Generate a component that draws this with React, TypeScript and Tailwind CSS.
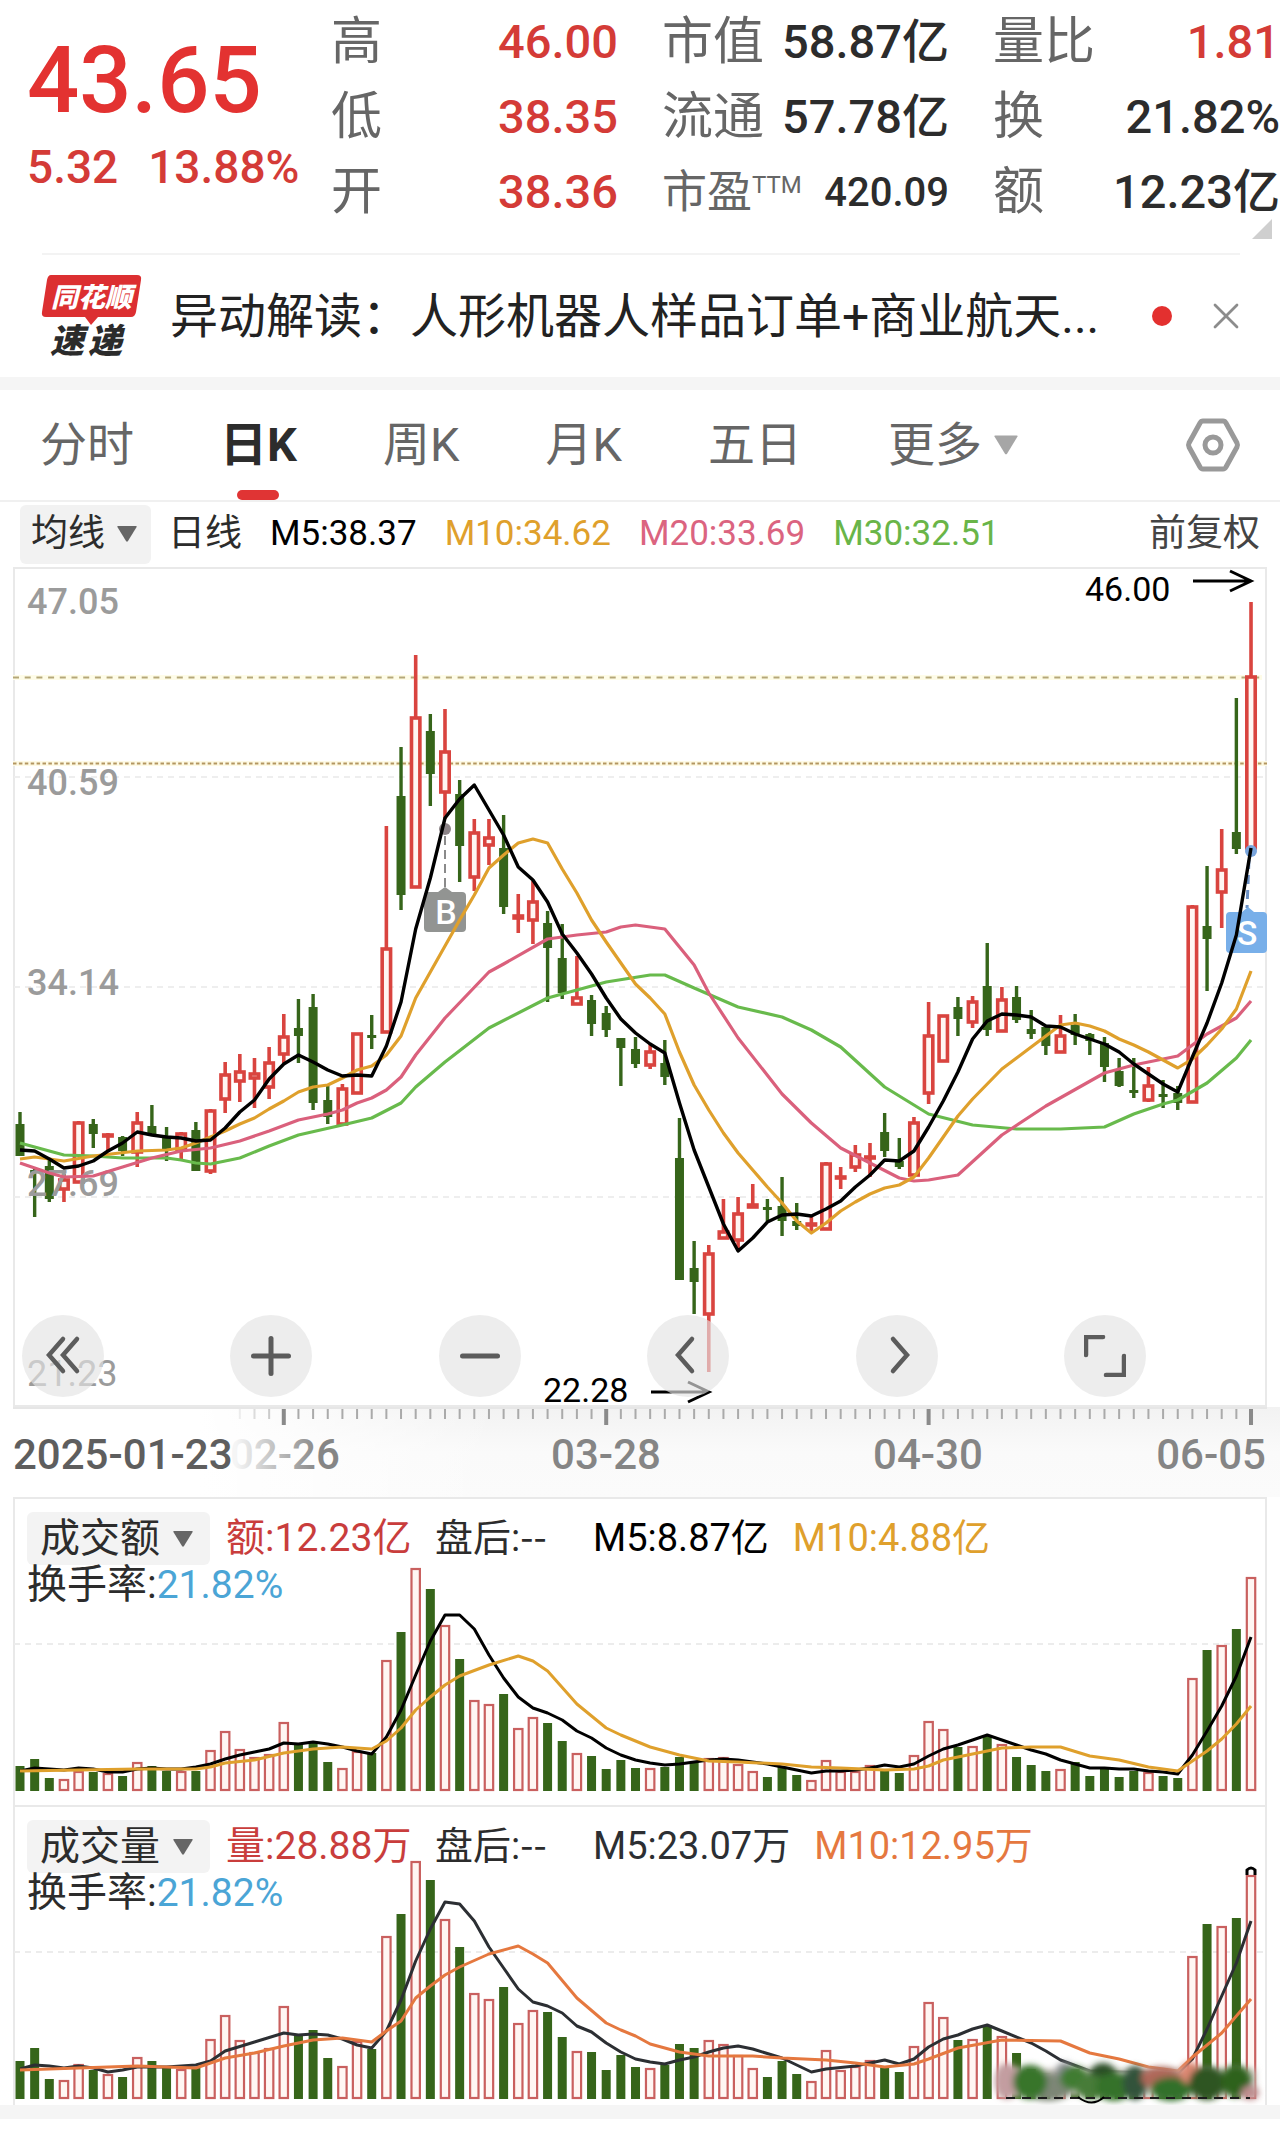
import { useState } from "react";
import { X, Plus, Minus } from "lucide-react";
import clsx from "clsx";

const RED = "#d9443f";
const GREEN = "#36651a";
const STEP = 14.655;
const xAt = (i: number) => 20 + i * STEP;

type Candle = [number, number, number, number];
type Point = [number, number];

// U = close above open, D = close below open, one letter per trading day
const DIRECTIONS =
  "DDDUUDUDUDDUDUUUUUUDDDUUDUDUDUDUUDUUDDUDDDDUDDDUUUUDDDUUUUUDDUUUDUDUDDDUDDDDDUDDUDUDU";
const isUp = (i: number) => DIRECTIONS[i] === "U";

// high, body top, body bottom, low
const CANDLES: Candle[] = [
  [1112, 1124, 1156, 1156], [1168, 1170, 1173, 1217], [1158, 1166, 1199, 1202], [1174, 1179, 1190, 1202],
  [1121, 1122, 1183, 1183], [1119, 1124, 1134, 1148], [1133, 1134, 1137, 1151], [1136, 1137, 1151, 1156],
  [1112, 1122, 1153, 1167], [1105, 1126, 1135, 1135], [1127, 1137, 1151, 1161], [1132, 1133, 1151, 1159],
  [1122, 1130, 1171, 1171], [1109, 1110, 1172, 1174], [1062, 1074, 1100, 1113], [1054, 1071, 1082, 1102],
  [1058, 1073, 1079, 1108], [1047, 1062, 1088, 1099], [1014, 1036, 1055, 1063], [999, 1028, 1036, 1063],
  [994, 1007, 1103, 1110], [1086, 1100, 1117, 1124], [1084, 1088, 1125, 1125], [1033, 1033, 1094, 1094],
  [1015, 1035, 1037, 1049], [826, 948, 1033, 1033], [747, 796, 895, 910], [655, 717, 888, 888],
  [714, 731, 774, 806], [709, 751, 793, 819], [780, 794, 846, 882], [819, 832, 878, 891],
  [819, 837, 846, 865], [815, 848, 907, 914], [894, 915, 919, 933], [881, 901, 921, 944],
  [911, 923, 948, 1002], [924, 958, 993, 999], [956, 997, 1005, 1005], [995, 1000, 1024, 1036],
  [1006, 1013, 1030, 1037], [1038, 1038, 1048, 1086], [1037, 1049, 1064, 1068], [1043, 1051, 1066, 1069],
  [1040, 1063, 1077, 1085], [1118, 1158, 1280, 1280], [1241, 1268, 1282, 1314], [1245, 1253, 1315, 1372],
  [1199, 1231, 1239, 1239], [1197, 1213, 1241, 1248], [1184, 1204, 1208, 1208], [1199, 1207, 1208, 1221],
  [1177, 1206, 1221, 1236], [1203, 1221, 1226, 1230], [1216, 1223, 1226, 1233], [1162, 1163, 1230, 1230],
  [1167, 1176, 1179, 1189], [1145, 1154, 1168, 1172], [1143, 1156, 1159, 1177], [1113, 1132, 1151, 1157],
  [1138, 1161, 1167, 1169], [1117, 1122, 1176, 1176], [1002, 1035, 1094, 1104], [1015, 1015, 1062, 1062],
  [997, 1007, 1019, 1036], [996, 1001, 1023, 1028], [943, 986, 1030, 1036], [987, 999, 1032, 1032],
  [986, 997, 1020, 1023], [1010, 1029, 1034, 1039], [1026, 1027, 1046, 1055], [1015, 1035, 1053, 1053],
  [1014, 1025, 1035, 1045], [1033, 1034, 1041, 1055], [1037, 1043, 1067, 1082], [1058, 1071, 1086, 1087],
  [1058, 1090, 1093, 1098], [1067, 1085, 1101, 1102], [1080, 1094, 1096, 1108], [1086, 1093, 1103, 1110],
  [905, 906, 1103, 1103], [866, 926, 939, 991], [829, 869, 893, 928], [698, 832, 849, 854],
  [602, 676, 849, 849],
];

const MA5: Point[] = [
  1150, 1151, 1159, 1168, 1166, 1161, 1151, 1143, 1132, 1135, 1137, 1138, 1141, 1140, 1128, 1112, 1100,
  1079, 1064, 1055, 1062, 1070, 1076, 1075, 1076, 1046, 1002, 929, 878, 818, 799, 785, 810, 835, 867, 880,
  902, 934, 953, 974, 998, 1019, 1033, 1044, 1053, 1103, 1150, 1187, 1224, 1251, 1238, 1222, 1215, 1214,
  1216, 1209, 1201, 1187, 1175, 1160, 1161, 1151, 1127, 1101, 1072, 1039, 1021, 1014, 1015, 1017, 1026,
  1027, 1034, 1039, 1044, 1052, 1064, 1074, 1084, 1092, 1057, 1023, 983, 935, 848,
].map((y, i) => [i, y]);

const MA10: Point[] = [
  [0, 1159], [1, 1157], [3, 1161], [5, 1156], [8, 1151], [10, 1150], [11, 1148], [12, 1143], [13, 1137],
  [14, 1131], [15, 1124], [16, 1118], [17, 1109], [18, 1101], [19, 1092], [20, 1087], [21, 1085], [22, 1078],
  [23, 1070], [24, 1066], [25, 1055], [26, 1036], [27, 998], [28, 972], [29, 946], [30, 920], [31, 895],
  [32, 868], [33, 855], [34, 843], [35, 839], [36, 843], [37, 869], [38, 893], [39, 920], [40, 942],
  [41, 963], [42, 984], [43, 998], [44, 1014], [45, 1052], [46, 1085], [47, 1110], [48, 1133], [49, 1153],
  [50, 1170], [51, 1187], [52, 1203], [53, 1221], [54, 1233], [55, 1223], [56, 1211], [57, 1202], [58, 1194],
  [59, 1188], [60, 1185], [61, 1177], [62, 1158], [63, 1137], [64, 1116], [65, 1099], [66, 1084], [67, 1069],
  [68, 1058], [69, 1047], [70, 1036], [71, 1025], [72, 1023], [73, 1026], [74, 1031], [75, 1039], [76, 1045],
  [77, 1052], [78, 1060], [79, 1068], [80, 1059], [81, 1045], [82, 1029], [83, 1009], [84, 971],
];

const MA20: Point[] = [
  [0, 1163], [1, 1168], [2, 1173], [3, 1177], [5, 1176], [7, 1167], [9, 1158], [11, 1151], [13, 1148],
  [15, 1141], [17, 1131], [19, 1120], [21, 1114], [22, 1110], [23, 1103], [24, 1098], [25, 1090], [26, 1077],
  [27, 1055], [29, 1018], [32, 972], [33, 964], [36, 939], [38, 935], [40, 932], [41, 927], [42, 925],
  [44, 929], [45, 947], [46, 965], [47, 993], [49, 1038], [52, 1094], [54, 1123], [56, 1148], [58, 1163],
  [60, 1178], [61, 1181], [62, 1180], [64, 1175], [67, 1135], [70, 1106], [74, 1073], [76, 1065], [79, 1056],
  [81, 1034], [83, 1018], [84, 1001],
];

const MA30: Point[] = [
  [0, 1143], [3, 1155], [5, 1156], [7, 1158], [10, 1158], [11, 1160], [12, 1163], [13, 1164], [15, 1158],
  [17, 1146], [19, 1135], [22, 1125], [24, 1118], [26, 1103], [27, 1087], [29, 1062], [32, 1028], [36, 998],
  [40, 982], [43, 975], [44, 975], [46, 988], [49, 1007], [52, 1017], [54, 1030], [56, 1047], [59, 1087],
  [62, 1114], [65, 1125], [68, 1129], [71, 1129], [74, 1127], [76, 1114], [78, 1104], [79, 1100], [81, 1083],
  [83, 1058], [84, 1040],
];

const AMOUNT = [
  25, 32, 13, 12, 20, 19, 18, 15, 29, 25, 20, 20, 20, 41, 60, 42, 34, 37, 69, 48, 49, 29, 23, 40, 38, 131, 159,
  223, 202, 166, 132, 91, 87, 97, 63, 74, 68, 50, 38, 35, 22, 31, 23, 23, 24, 34, 29, 33, 34, 27, 20, 14, 24,
  16, 11, 31, 20, 20, 26, 20, 18, 36, 70, 62, 44, 45, 56, 47, 34, 26, 20, 22, 29, 15, 22, 14, 20, 19, 15, 13,
  113, 141, 146, 162, 214,
];

const AMOUNT_MA5: Point[] = [
  20, 23, 22, 21, 23, 22, 19, 19, 22, 23, 22, 22, 24, 27, 32, 36, 39, 42, 48, 47, 49, 47, 44, 40, 37, 54, 81,
  116, 150, 176, 176, 162, 136, 113, 94, 83, 78, 71, 60, 53, 43, 36, 31, 28, 26, 27, 29, 31, 32, 31, 29, 27,
  24, 21, 18, 20, 20, 21, 23, 26, 24, 27, 35, 42, 46, 51, 56, 51, 46, 41, 37, 31, 27, 23, 23, 22, 22, 20, 19,
  17, 36, 60, 85, 115, 154,
].map((v, i) => [i, v]);

const AMOUNT_MA10: Point[] = [
  [0, 20], [4, 21], [8, 22], [12, 22], [13, 24], [14, 28], [16, 31], [18, 38], [20, 42], [22, 44], [24, 42],
  [25, 50], [26, 63], [27, 81], [28, 94], [29, 106], [30, 115], [32, 126], [34, 135], [35, 130], [36, 120],
  [38, 87], [40, 63], [41, 56], [42, 50], [43, 44], [45, 36], [47, 30], [49, 29], [52, 27], [54, 24], [56, 23],
  [59, 21], [61, 22], [62, 25], [63, 31], [65, 37], [67, 43], [69, 44], [71, 44], [73, 35], [75, 31], [77, 24],
  [79, 20], [80, 30], [81, 40], [82, 52], [83, 67], [84, 85],
];

const VOLUME = [
  38, 51, 20, 19, 35, 29, 25, 22, 42, 38, 31, 30, 31, 60, 84, 59, 47, 51, 93, 65, 69, 41, 33, 58, 50, 163, 185,
  238, 219, 180, 152, 106, 100, 112, 76, 89, 87, 62, 48, 47, 29, 44, 32, 31, 34, 55, 51, 59, 55, 44, 31, 22,
  38, 25, 18, 49, 29, 33, 39, 33, 27, 53, 97, 82, 59, 60, 74, 63, 46, 30, 26, 26, 30, 20, 26, 20, 24, 24, 20,
  18, 143, 175, 173, 181, 224,
];

const VOLUME_MA5: Point[] = [
  [0, 30], [1, 34], [2, 33], [3, 31], [4, 33], [5, 31], [6, 27], [7, 29], [8, 32], [10, 32], [12, 34], [13, 38],
  [14, 48], [16, 57], [18, 66], [19, 64], [20, 65], [21, 64], [22, 60], [23, 54], [24, 51], [25, 68], [26, 99],
  [27, 138], [28, 170], [29, 197], [30, 195], [31, 178], [32, 152], [33, 131], [34, 110], [35, 97], [36, 93],
  [37, 86], [38, 73], [39, 67], [40, 56], [41, 47], [42, 40], [43, 37], [44, 35], [45, 39], [46, 42], [47, 47],
  [48, 51], [49, 53], [50, 50], [52, 41], [54, 27], [55, 30], [57, 33], [59, 39], [60, 35], [61, 40], [62, 52],
  [63, 60], [64, 64], [65, 70], [66, 74], [67, 68], [69, 56], [70, 48], [71, 39], [73, 28], [79, 25], [80, 40],
  [81, 70], [82, 103], [83, 136], [84, 178],
];

const VOLUME_MA10: Point[] = [
  [0, 29], [4, 31], [8, 33], [12, 31], [13, 36], [14, 41], [16, 46], [18, 53], [20, 59], [22, 61], [24, 57],
  [25, 68], [26, 78], [27, 101], [28, 113], [29, 124], [30, 132], [32, 145], [34, 153], [35, 145], [36, 136],
  [38, 101], [40, 76], [41, 69], [42, 63], [43, 55], [45, 47], [47, 43], [50, 43], [52, 41], [55, 39], [57, 36],
  [59, 32], [61, 35], [62, 40], [64, 51], [67, 59], [71, 58], [73, 46], [75, 40], [77, 32], [79, 28], [80, 42],
  [82, 66], [84, 100],
];

const toPath = (points: Point[], y: (v: number) => number = (v) => v) =>
  points.map(([i, v]) => `${xAt(i)},${y(v)}`).join(" ");

interface Stat {
  label: string;
  value: string;
  red?: boolean;
  ttm?: boolean;
}

const STATS: Stat[][] = [
  [
    { label: "高", value: "46.00", red: true },
    { label: "低", value: "38.35", red: true },
    { label: "开", value: "38.36", red: true },
  ],
  [
    { label: "市值", value: "58.87亿" },
    { label: "流通", value: "57.78亿" },
    { label: "市盈", value: "420.09", ttm: true },
  ],
  [
    { label: "量比", value: "1.81", red: true },
    { label: "换", value: "21.82%" },
    { label: "额", value: "12.23亿" },
  ],
];

const TABS = ["分时", "日K", "周K", "月K", "五日"];

const Triangle = ({ className }: { className?: string }) => (
  <svg viewBox="0 0 20 16" aria-hidden="true" className={clsx("h-4 w-5 shrink-0", className)}>
    <path d="M1 0h18q1 0 .6 1L11 15q-1 1.4-2 0L.4 1Q0 0 1 0Z" fill="currentColor" />
  </svg>
);

const QuoteHeader = () => (
  <header className="relative flex h-[253px] pt-[5px] pl-[27px]">
    <div className="w-[304px] shrink-0 font-medium text-[#e33231]">
      <p className="pt-[22px] text-[92px] leading-[108px]">43.65</p>
      <p className="flex gap-[30px] pt-[2px] text-[46px] leading-[60px] text-[#d43b37]">
        <span>5.32</span>
        <span>13.88%</span>
      </p>
    </div>
    <div className="flex flex-1 gap-11">
      {STATS.map((column, c) => (
        <dl key={c} className="flex-1">
          {column.map((stat) => (
            <div key={stat.label} className="flex h-[75px] items-center justify-between whitespace-nowrap">
              <dt className={clsx("flex items-center text-[#666]", stat.ttm ? "text-[45px]" : "text-[51px]")}>
                {stat.label}
                {stat.ttm && <sup className="top-0 mb-4 text-2xl">TTM</sup>}
              </dt>
              <dd
                className={clsx(
                  "font-medium",
                  stat.ttm ? "text-[40px]" : "text-[47px]",
                  stat.red ? "text-[#d43b37]" : "text-[#2c2c2c]"
                )}
              >
                {stat.value}
              </dd>
            </div>
          ))}
        </dl>
      ))}
    </div>
    <svg viewBox="0 0 20 20" aria-hidden="true" className="absolute right-2 bottom-[14px] size-5">
      <path d="M20 0v20H0Z" fill="#cfcfcf" />
    </svg>
  </header>
);

const NewsBar = () => (
  <section className="mr-[40px] ml-[42px] flex h-[124px] items-center border-t-2 border-[#f3f3f3]">
    <svg viewBox="0 0 102 84" role="img" aria-label="同花顺速递" className="h-[84px] w-[102px] shrink-0 overflow-visible">
      <path d="M9 1h86q5 0 4 5l-5 32q-1 5-5 5H56l-7 8-6-8H4q-5 0-4-5L5 6q1-5 4-5Z" fill="#dc2f31" />
      <text x="9" y="33" fontSize="27" fontWeight="900" fontStyle="italic" fill="#fff">同花顺</text>
      <text x="8" y="79" fontSize="34" fontWeight="900" fontStyle="italic" fill="#2b2b2b">速</text>
      <text x="46" y="79" fontSize="34" fontWeight="900" fontStyle="italic" fill="#2b2b2b">递</text>
    </svg>
    <a href="#news" className="ml-[26px] min-w-0 pt-[2px] text-[48px] leading-[64px] whitespace-nowrap text-[#222]">
      异动解读：人形机器人样品订单+商业航天...
    </a>
    <span className="ml-auto size-5 rounded-full bg-[#e3302f]" />
    <button type="button" aria-label="关闭" className="-mr-[8px] ml-8 text-[#8c8c8c]">
      <X size={44} strokeWidth={1.5} />
    </button>
  </section>
);

const PeriodTabs = () => {
  const [active, setActive] = useState("日K");

  return (
    <nav className="flex h-[112px] items-stretch border-b-2 border-[#f0f0f0] pr-[39px] pl-[40px]">
      <div className="flex gap-[86px]" role="tablist">
        {TABS.map((tab) => (
          <button
            key={tab}
            type="button"
            role="tab"
            aria-selected={active === tab}
            onClick={() => setActive(tab)}
            className={clsx(
              "relative text-[47px] whitespace-nowrap",
              active === tab ? "font-bold text-[#2c2c2c]" : "text-[#666]"
            )}
          >
            {tab}
            {active === tab && (
              <span className="absolute bottom-0 left-1/2 h-[10px] w-[42px] -translate-x-1/2 rounded-full bg-[#e03434]" />
            )}
          </button>
        ))}
        <button type="button" className="flex items-center gap-3 text-[47px] text-[#666]">
          更多
          <Triangle className="h-5 w-6 text-[#a6a6a6]" />
        </button>
      </div>
      <button type="button" aria-label="设置" className="ml-auto">
        <svg viewBox="0 0 56 54" className="h-[54px] w-[56px]" fill="none" stroke="#999" strokeWidth="5">
          <path d="M18 3h20q2 0 3 2l11 20q1 2 0 4L41 49q-1 2-3 2H18q-2 0-3-2L4 29q-1-2 0-4L15 5q1-2 3-2Z" />
          <circle cx="28" cy="27" r="8" />
        </svg>
      </button>
    </nav>
  );
};

const MaBar = () => (
  <div className="flex h-[64px] items-center gap-[28px] px-5 text-[35px] whitespace-nowrap">
    <label className="-mr-2 flex h-[59px] w-[131px] items-center gap-3 rounded-md bg-[#f2f2f2] pl-[11px] text-[#666]">
      <select aria-label="指标" className="appearance-none bg-transparent text-[37px] leading-[48px] text-[#2c2c2c]">
        <option>均线</option>
      </select>
      <Triangle />
    </label>
    <span className="-ml-[3px] text-[37px] text-[#2c2c2c]">日线</span>
    <span className="text-black">M5:38.37</span>
    <span className="text-[#dfa02c]">M10:34.62</span>
    <span className="text-[#db6480]">M20:33.69</span>
    <span className="text-[#69b548]">M30:32.51</span>
    <span className="ml-auto text-[37px] text-[#444]">前复权</span>
  </div>
);

const CandleShape = ({ i, candle }: { i: number; candle: Candle }) => {
  const [high, top, bottom, low] = candle;
  const x = xAt(i);
  const height = Math.max(bottom - top, 3);

  if (!isUp(i)) {
    return (
      <g fill={GREEN}>
        <rect x={x - 1.7} y={high} width="3.4" height={low - high} />
        <rect x={x - 4.5} y={top} width="9" height={height} />
      </g>
    );
  }
  return (
    <g stroke={RED} strokeWidth="3.6">
      <path d={`M${x} ${high}V${top}M${x} ${bottom}V${low}`} />
      <rect x={x - 4.2} y={top + 1} width="8.4" height={Math.max(height - 2, 1)} fill="#fff6f3" />
    </g>
  );
};

const CONTROLS = [
  { label: "最早", icon: <path d="M21 4 7 20l14 16M35 4 21 20l14 16" /> },
  { label: "放大", icon: null, lucide: Plus },
  { label: "缩小", icon: null, lucide: Minus },
  { label: "左移", icon: <path d="M25 4 11 20l14 16" /> },
  { label: "右移", icon: <path d="m17 4 14 16-14 16" /> },
  { label: "全屏", icon: <path d="M2 20V2h17M40 21v19H22" /> },
];

const PriceChart = () => (
  <section className="relative">
    <svg viewBox="0 566 1280 841" className="block h-auto w-full overflow-visible" role="img" aria-label="日K线图">
      <path d="M14 1406V568H1266V1406Z" fill="none" stroke="#e9e9e9" strokeWidth="2" />
      {[777, 987, 1197].map((y) => (
        <path key={y} d={`M14 ${y}H1266`} stroke="#eeeeee" strokeWidth="2" strokeDasharray="6 5" />
      ))}
      <path d="M13 677.5H1262" stroke="#fefce8" strokeWidth="5" />
      <path d="M13 763.5H1267" stroke="#fefae4" strokeWidth="5" />
      <path d="M13 677.5H1262" stroke="#b5a878" strokeWidth="2" strokeDasharray="6 5.7" />
      <path d="M13 763.5H1267" stroke="#b39660" strokeWidth="2" strokeDasharray="3.5 2.4" />

      {CANDLES.map((candle, i) => (
        <CandleShape key={i} i={i} candle={candle} />
      ))}

      <g fill="#9b9b9b" fontSize="36" fontWeight="500">
        <text x="27" y="614">47.05</text>
        <text x="27" y="795">40.59</text>
        <text x="27" y="995">34.14</text>
        <text x="27" y="1196">27.69</text>
        <text x="27" y="1386" fontWeight="400">21.23</text>
      </g>

      {/* buy and sell marks */}
      <circle cx="445" cy="829" r="6" fill="#8c8488" />
      <path d="M445 836V888" stroke="#8a8a8a" strokeWidth="2" strokeDasharray="9 5" />
      <path d="M428 892H438L445 887 452 892H462Q466 892 466 896V928Q466 932 462 932H428Q424 932 424 928V896Q424 892 428 892Z" fill="#929492" />
      <circle cx="1251" cy="851" r="6" fill="#79a5dd" />
      <path d="M1249 860 1247 908" stroke="#6b90c4" strokeWidth="3" strokeDasharray="9 6" />
      <path d="M1230 912H1242L1248 907 1254 912H1263Q1267 912 1267 916V949Q1267 953 1263 953H1230Q1226 953 1226 949V916Q1226 912 1230 912Z" fill="#78afe9" />
      <g fill="#fff" fontSize="34" fontWeight="500" textAnchor="middle">
        <text x="446" y="924">B</text>
        <text x="1247" y="945">S</text>
      </g>

      <g fill="none" strokeWidth="3.2" strokeLinejoin="round">
        <polyline points={toPath(MA30)} stroke="#68ba4c" />
        <polyline points={toPath(MA20)} stroke="#da607c" />
        <polyline points={toPath(MA10)} stroke="#dfa02c" />
        <polyline points={toPath(MA5)} stroke="#000" strokeWidth="3.4" />
      </g>

      <g fill="#000" fontSize="34">
        <text x="1085" y="601">46.00</text>
        <text x="543" y="1402">22.28</text>
      </g>
      <g fill="none" stroke="#000" strokeWidth="3">
        <path d="M1193 581H1250M1230 571l21 10-21 10" />
        <path d="M651 1392H708M688 1382l21 10-21 10" />
      </g>
    </svg>
    <div className="absolute inset-x-0 bottom-[10px] flex justify-between pr-[134px] pl-[22px]">
      {CONTROLS.map(({ label, icon, lucide: Icon }) => (
        <button
          key={label}
          type="button"
          aria-label={label}
          className="flex size-[82px] items-center justify-center rounded-full bg-[#e3e3e3]/65 text-[#5c5c5c]"
        >
          {Icon ? (
            <Icon size={60} strokeWidth={2} />
          ) : (
            <svg viewBox="0 0 42 42" className="size-[42px]" fill="none" stroke="currentColor" strokeWidth="4.5" strokeLinecap="round">
              {icon}
            </svg>
          )}
        </button>
      ))}
    </div>
  </section>
);

const DateAxis = () => (
  <svg viewBox="0 0 1280 90" className="block h-auto w-full" role="img" aria-label="日期">
    <defs>
      <linearGradient id="axis-down" x1="0" x2="0" y1="0" y2="1">
        <stop offset="0" stopColor="#f2f2f2" />
        <stop offset="0.5" stopColor="#fafafa" />
        <stop offset="1" stopColor="#fbfbfb" />
      </linearGradient>
      <linearGradient id="axis-left" x1="0" x2="1" y1="0" y2="0">
        <stop offset="0" stopColor="#fff" />
        <stop offset="0.4" stopColor="#fff" />
        <stop offset="1" stopColor="#fff" stopOpacity="0" />
      </linearGradient>
      <linearGradient id="date-fade" gradientUnits="userSpaceOnUse" x1="236" x2="320" y1="0" y2="0">
        <stop offset="0" stopColor="#f5f5f5" />
        <stop offset="1" stopColor="#858585" />
      </linearGradient>
    </defs>
    <rect width="1280" height="90" fill="url(#axis-down)" />
    <rect width="500" height="90" fill="url(#axis-left)" />
    {CANDLES.map((_, i) => {
      if (i < 15) return null;
      const major = (i - 18) % 22 === 0;
      return (
        <rect
          key={i}
          x={xAt(i) - (major ? 2 : 1)}
          width={major ? 4 : 2}
          height={major ? 18 : 12}
          fill={major ? "#8a8a8a" : "#aaa"}
          opacity={i < 18 ? (i - 14) * 0.2 : 1}
        />
      );
    })}
    <path d="M13 1H1267" stroke="#e6e6e6" strokeWidth="2" />
    <g fontSize="42" fontWeight="500" fill="#858585">
      <text x="230" y="62" fill="url(#date-fade)">02-26</text>
      <text x="606" y="62" textAnchor="middle">03-28</text>
      <text x="928" y="62" textAnchor="middle">04-30</text>
      <text x="1266" y="62" textAnchor="end">06-05</text>
      <text x="13" y="62" fill="#5e5e5e">2025-01-23</text>
    </g>
  </svg>
);

interface BarPanelProps {
  title: string;
  label: string;
  value: string;
  m5: string;
  m10: string;
  bars: number[];
  ma5: Point[];
  ma10: Point[];
  dark: string;
  accent: string;
  darkClass: string;
  accentClass: string;
  height: number;
  children?: React.ReactNode;
}

const BASE = 294;
const up = (v: number) => BASE - v;

const BarPanel = ({
  title,
  label,
  value,
  m5,
  m10,
  bars,
  ma5,
  ma10,
  dark,
  accent,
  darkClass,
  accentClass,
  height,
  children,
}: BarPanelProps) => (
  <section className="relative">
    <svg viewBox={`0 0 1280 ${height}`} className="block h-auto w-full" role="img" aria-label={title}>
      <path d={`M14 ${height}V1H1266V${height}`} fill="none" stroke="#e9e9e9" strokeWidth="2" />
      <path d="M14 147H1266" stroke="#ececec" strokeWidth="2" strokeDasharray="6 5" />
      {bars.map((h, i) =>
        isUp(i) ? (
          <rect key={i} x={xAt(i) - 4.2} y={up(h) + 1} width="8.4" height={h - 2} fill="#fff6f3" stroke="#c9605f" strokeWidth="2.2" />
        ) : (
          <rect key={i} x={xAt(i) - 4.5} y={up(h)} width="9" height={h} fill={GREEN} />
        )
      )}
      <g fill="none" strokeWidth="3" strokeLinejoin="round">
        <polyline points={toPath(ma5, up)} stroke={dark} />
        <polyline points={toPath(ma10, up)} stroke={accent} />
      </g>
      {children}
    </svg>
    <div className="absolute inset-x-0 top-[15px] pl-[27px] text-[38px] whitespace-nowrap text-[#2c2c2c]">
      <div className="flex h-[53px] items-center gap-6">
        <label className="-mr-2 flex h-[53px] w-[183px] items-center gap-[13px] rounded-md bg-[#f2f2f2]/90 pl-[13px] text-[#666]">
          <select aria-label="副图指标" className="appearance-none bg-transparent text-[40px] leading-[50px] text-[#2c2c2c]">
            <option>{title}</option>
          </select>
          <Triangle />
        </label>
        <span className="w-[185px] text-[39px] text-[#c93d3c]">
          {label}:{value}
        </span>
        <span className="w-[134px]">
          盘后:<span className="font-['Noto_Sans_CJK_SC',sans-serif] leading-none">--</span>
        </span>
        <span className={darkClass}>M5:{m5}</span>
        <span className={accentClass}>M10:{m10}</span>
      </div>
      <p className="leading-[40px]">
        <span className="text-[40px]">换手率:</span>
        <span className="text-[39px] text-[#4ba5d6]">21.82%</span>
      </p>
    </div>
  </section>
);

const SMUDGES = [
  { x: 1007, y: 276, rx: 12, ry: 18, fill: "#c39da0" },
  { x: 1048, y: 282, rx: 24, ry: 14, fill: "#7d8676" },
  { x: 1030, y: 277, rx: 17, ry: 17, fill: "#37752a" },
  { x: 1065, y: 266, rx: 9, ry: 9, fill: "#8b8e92" },
  { x: 1074, y: 273, rx: 14, ry: 12, fill: "#3f7c31" },
  { x: 1103, y: 272, rx: 14, ry: 14, fill: "#2b4d26" },
  { x: 1092, y: 282, rx: 16, ry: 12, fill: "#467c38" },
  { x: 1114, y: 282, rx: 18, ry: 14, fill: "#35722a" },
  { x: 1135, y: 278, rx: 12, ry: 17, fill: "#31523a" },
  { x: 1161, y: 273, rx: 20, ry: 11, fill: "#b0675a" },
  { x: 1171, y: 284, rx: 20, ry: 12, fill: "#33702a" },
  { x: 1190, y: 268, rx: 10, ry: 11, fill: "#dd8772" },
  { x: 1207, y: 278, rx: 18, ry: 17, fill: "#2d5422" },
  { x: 1236, y: 276, rx: 15, ry: 16, fill: "#2f621d" },
  { x: 1250, y: 288, rx: 9, ry: 7, fill: "#c08f90" },
];

export default function App() {
  return (
    <main className="min-h-screen w-full overflow-x-hidden bg-white font-[Roboto,'Noto_Sans_CJK_SC',sans-serif]">
      <QuoteHeader />
      <NewsBar />
      <div className="h-[13px] bg-[#f5f5f5]" />
      <PeriodTabs />
      <MaBar />
      <PriceChart />
      <DateAxis />
      <BarPanel
        title="成交额"
        label="额"
        value="12.23亿"
        m5="8.87亿"
        m10="4.88亿"
        bars={AMOUNT}
        ma5={AMOUNT_MA5}
        ma10={AMOUNT_MA10}
        dark="#000"
        accent="#dfa02c"
        darkClass="text-black"
        accentClass="text-[#dfa02c]"
        height={308}
      />
      <BarPanel
        title="成交量"
        label="量"
        value="28.88万"
        m5="23.07万"
        m10="12.95万"
        bars={VOLUME}
        ma5={VOLUME_MA5}
        ma10={VOLUME_MA10}
        dark="#2c2f33"
        accent="#e5783f"
        darkClass="text-[#2c2f33]"
        accentClass="text-[#e5783f]"
        height={300}
      >
        <defs>
          <filter id="smudge" x="-10%" y="-50%" width="120%" height="200%">
            <feGaussianBlur stdDeviation="3" />
          </filter>
        </defs>
        <rect x="1000" y="264" width="256" height="26" fill="#c9c4bd" filter="url(#smudge)" />
        <g filter="url(#smudge)">
          {SMUDGES.map((s) => (
            <ellipse key={s.x} cx={s.x} cy={s.y} rx={s.rx} ry={s.ry} fill={s.fill} />
          ))}
        </g>
        <path d="M1006 293H1250" stroke="#1c1c1c" strokeWidth="2" strokeDasharray="9 7" />
        <path d="M1078 292q14 11 26 0" fill="none" stroke="#000" strokeWidth="2" />
        <path d="M1247 70v-5q4-4 8 0v5" fill="none" stroke="#000" strokeWidth="3" />
      </BarPanel>
      <div className="h-[14px] bg-[#f5f5f5]" />
    </main>
  );
}
